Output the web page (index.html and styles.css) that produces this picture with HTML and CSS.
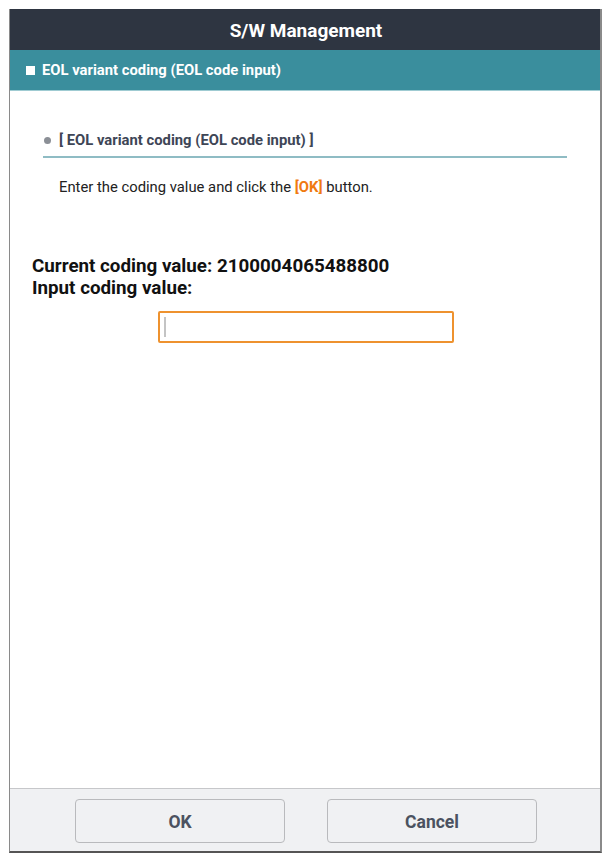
FILE: index.html
```html
<!DOCTYPE html>
<html>
<head>
<meta charset="utf-8">
<link rel="stylesheet" href="styles.css">
</head>
<body>
<div class="frame">
  <div class="title-bar">S/W Management</div>
  <div class="section-bar"><span class="square"></span>EOL variant coding (EOL code input)</div>
  <div class="content">
    <div class="sub-title"><span class="dot"></span>[ EOL variant coding (EOL code input) ]</div>
    <div class="desc">Enter the coding value and click the <span class="ok">[OK]</span> button.</div>
    <div class="values">
      <div>Current coding value: 2100004065488800</div>
      <div>Input coding value:</div>
    </div>
    <div class="input-row"><div class="input-box"><span class="caret"></span></div></div>
  </div>
  <div class="footer">
    <div class="btn">OK</div>
    <div class="btn">Cancel</div>
  </div>
</div>
</body>
</html>
```
FILE: styles.css
```css
html, body {
  margin: 0;
  padding: 0;
  background: #ffffff;
  font-family: Roboto, "Liberation Sans", Arial, sans-serif;
}
.frame {
  margin: 9px 10px 0 9px;
  width: 593px;
  height: 844px;
  box-sizing: border-box;
  border-left: 1px solid #8a8a8a;
  border-right: 2px solid #8a8a8a;
  border-bottom: 2px solid #555;
  display: flex;
  flex-direction: column;
}
.title-bar {
  height: 41px;
  box-sizing: border-box;
  padding-top: 2px;
  background: #2e3541;
  color: #ffffff;
  font-size: 19px;
  font-weight: 700;
  display: flex;
  align-items: center;
  justify-content: center;
  padding-left: 2px;
}
.section-bar {
  height: 41px;
  box-sizing: border-box;
  background: #3a8e9d;
  border-bottom: 1px solid #9fcbd2;
  color: #ffffff;
  font-size: 14.8px;
  font-weight: 700;
  display: flex;
  align-items: center;
  padding-left: 16px;
}
.square {
  width: 9px;
  height: 9px;
  background: #ffffff;
  margin-right: 7px;
}
.content {
  flex: 1;
  padding: 39px 0 0 0;
}
.sub-title {
  margin: 0 33px 0 33px;
  height: 28px;
  box-sizing: border-box;
  border-bottom: 2px solid #8fbcc4;
  font-size: 14.8px;
  font-weight: 700;
  color: #3e4656;
  display: flex;
  align-items: flex-start;
  padding-left: 1px;
  line-height: 20px;
}
.dot {
  width: 7px;
  height: 7px;
  border-radius: 50%;
  background: #8b8f96;
  margin: 7px 8px 0 0;
}
.desc {
  margin: 19px 0 0 49px;
  font-size: 14.8px;
  color: #222;
  line-height: 20px;
}
.ok {
  color: #f07a10;
  font-weight: 700;
}
.values {
  margin: 58px 0 0 22px;
  font-size: 18.8px;
  font-weight: 700;
  color: #111;
  line-height: 22px;
}
.input-row {
  margin: 12px 0 0 148px;
}
.input-box {
  width: 296px;
  height: 32px;
  box-sizing: border-box;
  border: 2px solid #ee922f;
  border-radius: 2px;
  background: #fff;
  display: flex;
  align-items: center;
  padding-left: 4px;
}
.caret {
  width: 2px;
  height: 20px;
  background: #c4c4c4;
}
.footer {
  height: 63px;
  background: #f0f1f3;
  border-top: 1px solid #c6c7ca;
  display: flex;
  align-items: flex-start;
  justify-content: center;
  gap: 42px;
  padding-top: 10px;
  padding-left: 2px;
  box-sizing: border-box;
}
.btn {
  width: 210px;
  height: 44px;
  box-sizing: border-box;
  padding-top: 2px;
  border: 1px solid #b9babd;
  border-radius: 4px;
  background: #f0f1f3;
  color: #4b5260;
  font-size: 17.5px;
  font-weight: 700;
  display: flex;
  align-items: center;
  justify-content: center;
}
```
